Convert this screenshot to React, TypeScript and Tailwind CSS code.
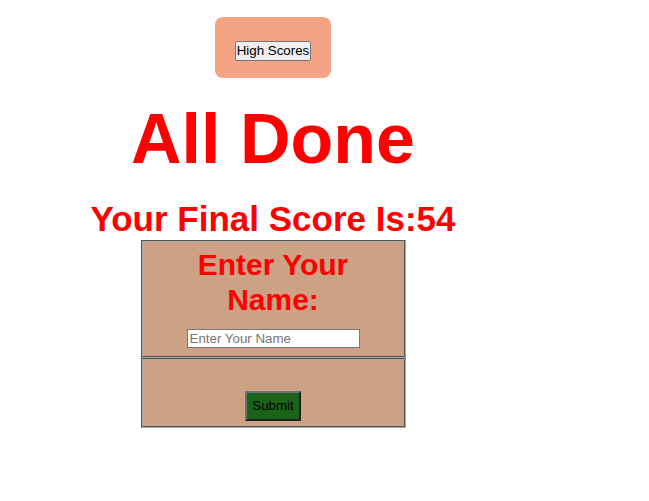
export default function App() {
  return (
    <div className="w-[546px] pt-[17px] text-center font-['Liberation_Sans',Arial,sans-serif]">
      <div className="mx-auto flex h-[61px] w-[116px] items-center justify-center rounded-lg bg-[#f5a385] pt-[7px]">
        <button
          type="button"
          className="h-[20px] w-[76px] rounded-[2px] border border-[#767676] bg-[#efefef] text-[13.33px] leading-[16px] text-black"
        >
          High Scores
        </button>
      </div>

      <h1 className="mt-[21px] text-[70px] font-bold leading-[80px] text-[#ff0000]">All Done</h1>
      <h2 className="mt-[20px] text-[35px] font-bold leading-[40px] text-[#ff0000]">
        Your Final Score Is:54
      </h2>

      <div className="mx-auto mt-[1px] w-[265px]">
        <div className="border-2 border-[#a9a9a9] bg-[#cda184] px-[12px] pb-[6px] pt-[6px] [border-style:groove]">
          <h3 className="text-[30px] font-bold leading-[34.5px] text-[#ff0000]">Enter Your Name:</h3>
          <input
            type="text"
            placeholder="Enter Your Name"
            className="mt-[12px] h-[19px] w-[173px] border border-[#767676] bg-white px-[2px] text-[13.33px] text-black placeholder:text-[#757575] focus:outline-none"
          />
        </div>
        <div className="border-2 border-[#a9a9a9] bg-[#cda184] pb-[5px] pt-[31px] [border-style:groove]">
          <button
            type="button"
            className="h-[30px] w-[56px] border-2 border-b-[#202020] border-l-[#707070] border-r-[#202020] border-t-[#707070] bg-[#1a6319] text-[13.33px] text-black"
          >
            Submit
          </button>
        </div>
      </div>
    </div>
  );
}
